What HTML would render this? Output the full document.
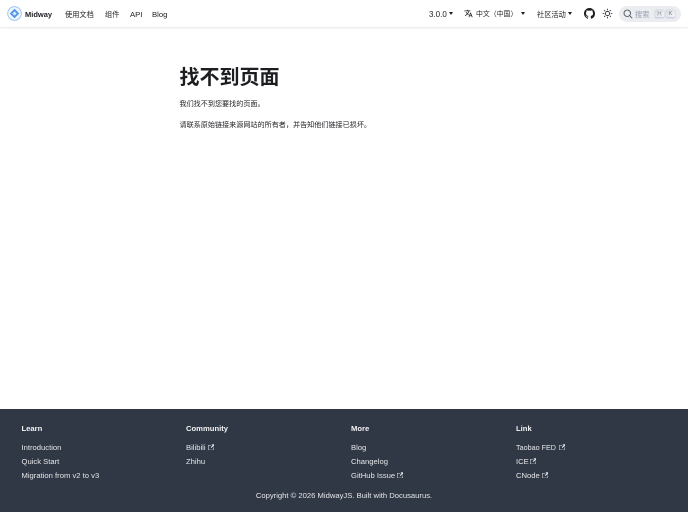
<!DOCTYPE html>
<html lang="zh-CN"><head><meta charset="utf-8"><title>找不到页面</title>
<style>
*{box-sizing:border-box}
html,body{margin:0;padding:0;width:688px;height:512px;overflow:hidden;background:#fff}
body{font-family:"Liberation Sans","Noto Sans CJK SC",sans-serif;color:#1c1e21;position:relative}
.t{position:absolute;white-space:nowrap;line-height:12px;font-size:7.7px;filter:blur(.2px)}
.z{font-size:7.2px}
nav{position:absolute;left:0;top:0;width:688px;height:27px;background:#fff;box-shadow:0 1px 2px rgba(0,0,0,.1)}
nav .t{margin-top:.5px}
footer{position:absolute;left:0;top:409px;width:688px;height:103px;background:#303846}
.f{color:#e6e7e9;font-size:7.65px}
.h{color:#f2f3f4;font-weight:bold;font-size:7.65px}
.c{position:absolute;width:0;height:0;border-left:2.7px solid transparent;border-right:2.7px solid transparent;border-top:3.2px solid #1c1e21}
svg{position:absolute}
</style></head><body>
<nav>
<svg style="left:7px;top:6px" width="15" height="15" viewBox="0 0 15 15"><circle cx="7.5" cy="7.5" r="6.8" fill="#eef5fd" stroke="#8fbdf0" stroke-width=".8"/><path d="M7.5 2.8 12.2 7.5 7.5 12.2 2.8 7.5Z" fill="#4d94e6"/><path d="M5.2 7.5 7.5 5.4 9.8 7.5 7.5 9.6Z" fill="#d6e7fa"/></svg>
<div class="t" style="left:25px;top:8px;font-weight:bold;color:#1c1e21;font-size:7.5px">Midway</div>
<div class="t z" style="left:65px;top:8px">使用文档</div>
<div class="t z" style="left:105px;top:8px">组件</div>
<div class="t" style="left:130px;top:8px">API</div>
<div class="t" style="left:152px;top:8px">Blog</div>
<div class="t" style="left:429px;top:8px;font-size:8px">3.0.0</div><div class="c" style="left:448.500px;top:12px"></div>
<svg style="left:464px;top:9px" width="9" height="9" viewBox="0 0 24 24"><path fill="#1c1e21" d="M12.87 15.07l-2.54-2.51.03-.03c1.74-1.94 2.98-4.17 3.71-6.53H17V4h-7V2H8v2H1v1.99h11.17C11.5 7.92 10.44 9.75 9 11.35 8.07 10.32 7.3 9.19 6.69 8h-2c.73 1.63 1.73 3.17 2.98 4.56l-5.09 5.02L4 19l5-5 3.11 3.11.76-2.04zM18.5 10h-2L12 22h2l1.12-3h4.75L21 22h2l-4.5-12zm-2.62 7l1.62-4.33L19.12 17h-3.24z"/></svg>
<div class="t" style="left:476px;top:8px;font-size:6.9px">中文（中国）</div><div class="c" style="left:520.500px;top:12px"></div>
<div class="t z" style="left:537px;top:8px">社区活动</div><div class="c" style="left:568px;top:12px"></div>
<svg style="left:584px;top:8px" width="11" height="11" viewBox="0 0 16 16"><path fill="#1c1e21" d="M8 0C3.58 0 0 3.58 0 8c0 3.54 2.29 6.53 5.47 7.59.4.07.55-.17.55-.38 0-.19-.01-.82-.01-1.49-2.01.37-2.53-.49-2.69-.94-.09-.23-.48-.94-.82-1.13-.28-.15-.68-.52-.01-.53.63-.01 1.08.58 1.23.82.72 1.21 1.87.87 2.33.66.07-.52.28-.87.51-1.07-1.78-.2-3.64-.89-3.64-3.95 0-.87.31-1.59.82-2.15-.08-.2-.36-1.02.08-2.12 0 0 .67-.21 2.2.82.64-.18 1.32-.27 2-.27s1.36.09 2 .27c1.53-1.04 2.2-.82 2.2-.82.44 1.1.16 1.92.08 2.12.51.56.82 1.27.82 2.15 0 3.07-1.87 3.75-3.65 3.95.29.25.54.73.54 1.48 0 1.07-.01 1.93-.01 2.2 0 .21.15.46.55.38A8.01 8.01 0 0016 8c0-4.42-3.58-8-8-8z"/></svg>
<svg style="left:601.5px;top:8px" width="11" height="11" viewBox="0 0 24 24" fill="none" stroke="#1c1e21" stroke-width="1.8"><circle cx="12" cy="12" r="4.5"/><path d="M12 1.5v3.5M12 19v3.5M1.5 12H5M19 12h3.500M4.600 4.600 7 7M17 17l2.400 2.400M4.600 19.400 7 17M17 7l2.400-2.400"/></svg>
<div style="position:absolute;left:619px;top:5.500px;width:62px;height:16px;border-radius:8px;background:#ebedf0"></div>
<svg style="left:623px;top:8.500px" width="10" height="10" viewBox="0 0 20 20" fill="none" stroke="#444950" stroke-width="1.700"><circle cx="8.500" cy="8.500" r="6.500"/><path d="M13.500 13.500 18.500 18.500"/></svg>
<div class="t z" style="left:635px;top:8px;color:#969faf">搜索</div>
<div style="position:absolute;left:655px;top:9.500px;width:9px;height:8px;border-radius:1.500px;background:linear-gradient(-225deg,#d5dbe4,#f8f8f8);box-shadow:inset 0 -1px 0 #cdcde6,0 0 0 .5px #cfd3da"></div>
<div style="position:absolute;left:666px;top:9.500px;width:9px;height:8px;border-radius:1.500px;background:linear-gradient(-225deg,#d5dbe4,#f8f8f8);box-shadow:inset 0 -1px 0 #cdcde6,0 0 0 .5px #cfd3da"></div>
<div class="t" style="left:655px;top:7.500px;width:9px;text-align:center;font-size:5px;color:#777">⌘</div>
<div class="t" style="left:666px;top:7.500px;width:9px;text-align:center;font-size:5px;color:#777">K</div>
</nav>
<div class="t" style="left:179.500px;top:65px;font-size:20px;line-height:26px;font-weight:bold;color:#1c1e21">找不到页面</div>
<div class="t" style="left:179.500px;top:98px;font-size:7.100px">我们找不到您要找的页面。</div>
<div class="t" style="left:179.500px;top:119px;font-size:7.100px">请联系原始链接来源网站的所有者，并告知他们链接已损坏。</div>
<footer>
<div class="t h" style="left:21.500px;top:14px">Learn</div>
<div class="t f" style="left:21.500px;top:33px">Introduction</div>
<div class="t f" style="left:21.500px;top:47px">Quick Start</div>
<div class="t f" style="left:21.500px;top:60.500px">Migration from v2 to v3</div>
<div class="t h" style="left:186px;top:14px">Community</div>
<div class="t f" style="left:186px;top:33px">Bilibili</div>
<div class="t f" style="left:186px;top:47px">Zhihu</div>
<div class="t h" style="left:351px;top:14px">More</div>
<div class="t f" style="left:351px;top:33px">Blog</div>
<div class="t f" style="left:351px;top:47px">Changelog</div>
<div class="t f" style="left:351px;top:60.500px">GitHub Issue</div>
<div class="t h" style="left:516px;top:14px">Link</div>
<div class="t f" style="left:516px;top:33px;font-size:7.200px">Taobao FED</div>
<div class="t f" style="left:516px;top:47px">ICE</div>
<div class="t f" style="left:516px;top:60.500px">CNode</div>
<div class="t f" style="left:0;width:688px;text-align:center;top:81px">Copyright © 2026 MidwayJS. Built with Docusaurus.</div>
<svg style="left:207.500px;top:34.500px" width="6.500" height="6.500" viewBox="0 0 24 24"><path fill="#e6e7e9" d="M21 13v10h-21v-19h12v2h-10v15h17v-8h2zm3-12h-10.988l4.035 4-6.977 7.070 2.828 2.828 6.977-7.070 4.125 4.172v-11z"/></svg>
<svg style="left:396.500px;top:62.500px" width="6.500" height="6.500" viewBox="0 0 24 24"><path fill="#e6e7e9" d="M21 13v10h-21v-19h12v2h-10v15h17v-8h2zm3-12h-10.988l4.035 4-6.977 7.070 2.828 2.828 6.977-7.070 4.125 4.172v-11z"/></svg>
<svg style="left:558.500px;top:34.500px" width="6.500" height="6.500" viewBox="0 0 24 24"><path fill="#e6e7e9" d="M21 13v10h-21v-19h12v2h-10v15h17v-8h2zm3-12h-10.988l4.035 4-6.977 7.070 2.828 2.828 6.977-7.070 4.125 4.172v-11z"/></svg>
<svg style="left:529.500px;top:48.500px" width="6.500" height="6.500" viewBox="0 0 24 24"><path fill="#e6e7e9" d="M21 13v10h-21v-19h12v2h-10v15h17v-8h2zm3-12h-10.988l4.035 4-6.977 7.070 2.828 2.828 6.977-7.070 4.125 4.172v-11z"/></svg>
<svg style="left:541.500px;top:62.500px" width="6.500" height="6.500" viewBox="0 0 24 24"><path fill="#e6e7e9" d="M21 13v10h-21v-19h12v2h-10v15h17v-8h2zm3-12h-10.988l4.035 4-6.977 7.070 2.828 2.828 6.977-7.070 4.125 4.172v-11z"/></svg>
</footer>
</body></html>
